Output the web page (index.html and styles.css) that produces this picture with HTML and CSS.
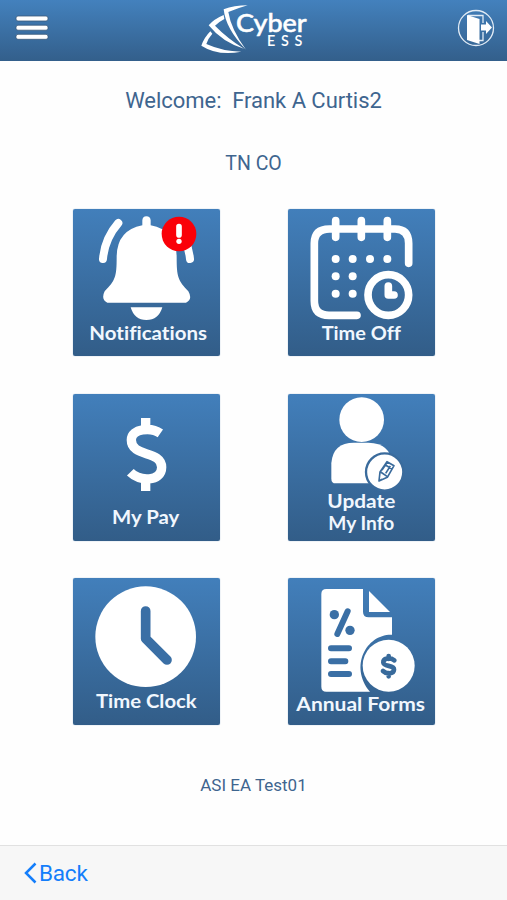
FILE: index.html
```html
<!DOCTYPE html>
<html lang="en">
<head>
<meta charset="utf-8">
<title>Cyber ESS</title>
<link rel="stylesheet" href="styles.css">
</head>
<body>
<header class="topbar">
  <svg class="menu" viewBox="0 0 36 30">
    <g class="bar"><rect x="2" y="3" width="32" height="5" rx="2"/><rect x="2" y="12.2" width="32" height="5" rx="2"/><rect x="2" y="21.3" width="32" height="5" rx="2"/></g>
  </svg>
  <svg class="logo" viewBox="0 0 390 183">
    <path d="M173 16Q132 16 101 28Q107 87 168 149Q123 88 115 36Q142 25 173 16Z"/>
    <path d="M101 45Q72 57 56 76Q98 128 162 146Q112 115 75 77Q86 66 103 57Z"/>
    <path d="M61 94Q43 112 34 137Q84 169 154 155Q98 154 49 132Q55 114 67 101Z"/>
    <text class="brand" x="138" y="96" textLength="212" lengthAdjust="spacingAndGlyphs">Cyber</text>
    <text class="brand-sub" x="231" y="138" textLength="106">ESS</text>
  </svg>
  <svg class="exit" viewBox="0 0 38 38">
    <circle class="thin" cx="19" cy="19" r="17.5"/>
    <path class="thin" d="M11 6.500H26V14M26 23V31.500H22"/>
    <path d="M10 6L22.500 10V35L10 31Z"/>
    <path d="M24 15.500H29V12L35 18.500L29 25V21.500H24Z"/>
  </svg>
</header>
<main class="content">
  <h1 class="welcome">Welcome:&nbsp; Frank A Curtis2</h1>
  <p class="company">TN CO</p>
  <nav class="tiles">
    <a class="tile"><svg viewBox="24 27 441 441">
      <path d="M232 76V61Q233 49 244 49Q256 49 257 61V76Q335 91 335 172C335 231 339 242 370 274Q384 298 363 308H127Q107 298 119 274C151 242 155 231 155 172Q155 91 232 76ZM197 322H292Q281 360 244 360Q208 360 197 322Z"/>
      <path class="line bell-wave" d="M160 69Q119 116 114 177M326 69Q369 116 375 177"/>
      <circle class="alert" cx="342" cy="102" r="52"/>
      <path class="line mark" d="M342 80V105"/><circle cx="342" cy="124" r="8"/>
      <text class="caption" x="73" y="419" textLength="353" lengthAdjust="spacingAndGlyphs">Notifications</text>
    </svg></a>
    <a class="tile"><svg viewBox="24 27 441 441">
      <path class="line calendar" d="M386 190V130Q386 87 345 87H148Q103 87 103 130V303Q103 346 147 346H231M167 62V112M244 62V112M322 62V112"/>
      <g><circle cx="167" cy="177" r="12"/><circle cx="218" cy="177" r="12"/><circle cx="270" cy="177" r="12"/><circle cx="322" cy="177" r="12"/><circle cx="167" cy="229" r="12"/><circle cx="218" cy="229" r="12"/><circle cx="167" cy="281" r="12"/><circle cx="218" cy="281" r="12"/></g>
      <circle class="line calendar" cx="325" cy="285" r="61"/>
      <path class="line calendar" d="M325 258V285H342"/>
      <text class="caption" x="125" y="419" textLength="238" lengthAdjust="spacingAndGlyphs">Time Off</text>
    </svg></a>
    <a class="tile"><svg viewBox="24 27 441 441">
      <path class="line dollar" d="M242 99V135M242 282V318M286 145C259 126 199 130 199 165C199 218 290 195 290 247C290 292 222 289 196 262"/>
      <text class="caption" x="141" y="417" textLength="202" lengthAdjust="spacingAndGlyphs">My Pay</text>
    </svg></a>
    <a class="tile"><svg viewBox="24 27 441 441">
      <circle cx="245" cy="104" r="67"/>
      <path d="M167 295Q154 295 154 281V234Q159 173 222 173H265Q333 175 337 237V295Z"/>
      <circle class="edit-ring" cx="314" cy="261" r="56"/>
      <path class="pencil" d="M297 288L300 261L321 230L342 242L322 277ZM315 239L336 252M302 261L321 274M317 265L331 243M306 255L322 232M297 288L306 283"/>
      <text class="caption" x="142" y="370" textLength="204" lengthAdjust="spacingAndGlyphs">Update</text>
      <text class="caption" x="145" y="435" textLength="198" lengthAdjust="spacingAndGlyphs">My Info</text>
    </svg></a>
    <a class="tile"><svg viewBox="24 27 441 441">
      <circle cx="242" cy="203" r="151"/>
      <path class="line hands" d="M242 126V209L306 273"/>
      <text class="caption" x="93" y="417" textLength="302" lengthAdjust="spacingAndGlyphs">Time Clock</text>
    </svg></a>
    <a class="tile"><svg viewBox="24 27 441 441">
      <path d="M139 60H249V128Q249 145 266 145H336V197C261 194 206 290 270 368H139Q124 368 124 353V75Q124 60 139 60ZM267 66L330 129H267Z"/>
      <g class="ink"><circle cx="163" cy="137" r="14"/><circle cx="210" cy="184" r="14"/></g>
      <path class="line form-line" d="M203 127L172 195M153 238H207M153 277H196M153 315H207"/>
      <circle cx="326" cy="290" r="78"/>
      <path class="line small-dollar" d="M326 261V270M326 312V322M343 274C329 264 309 268 310 281C311 295 343 286 342 302C341 316 319 316 309 306"/>
      <text class="caption" x="49" y="425" textLength="386" lengthAdjust="spacingAndGlyphs">Annual Forms</text>
    </svg></a>
  </nav>
  <p class="account">ASI EA Test01</p>
</main>
<footer class="bottombar">
  <a class="back"><svg class="chevron" viewBox="0 0 13 22"><path d="M11.500 1.500L2 11L11.500 20.500"/></svg><span>Back</span></a>
</footer>
</body>
</html>
```
FILE: styles.css
```css
* { box-sizing: border-box; }
body {
  margin: 0;
  height: 900px;
  display: flex;
  flex-direction: column;
  background: #fefefe;
  color: #3e658f;
  font-family: Roboto, sans-serif;
  overflow: hidden;
}
svg { display: block; fill: #fff; }
.topbar {
  height: 61px;
  flex: none;
  display: grid;
  grid-template-columns: 60px 1fr 60px;
  background: linear-gradient(#4381bd, #335f8b);
}
.menu { width: 36px; height: 30px; margin: 13px 0 0 14px; }
.bar { stroke: #3a5878; stroke-width: .8; }
.logo { width: 130px; height: 61px; justify-self: center; margin-left: 3px; }
.brand { font: 500 76px Lato, sans-serif; stroke: #fff; stroke-width: 1.5; }
.brand-sub { font: 600 43px Lato, sans-serif; }
.exit { width: 38px; height: 38px; margin: 9px 0 0 10px; }
.thin { fill: none; stroke: #e1ebf5; stroke-width: 1.3; }
.content { flex: 1; display: flex; flex-direction: column; align-items: center; }
.welcome, .company, .account { margin: 0; font-weight: 400; white-space: pre; }
.welcome { margin-top: 26px; font-size: 22px; line-height: 28px; letter-spacing: -.04px; }
.company { margin-top: 37px; font-size: 19.500px; line-height: 24px; }
.tiles {
  margin-top: 33px;
  display: grid;
  grid-template-columns: 147px 147px;
  gap: 37.500px 68px;
}
.tile {
  height: 147px;
  border-radius: 2px;
  background: linear-gradient(#427fbb, #325d88);
  box-shadow: 0 0 1px #6892b8;
}
.tile svg { width: 147px; height: 147px; }
.caption {
  font: 700 58px Lato, sans-serif;
  font-variant-ligatures: none;
  fill: #f1f7fe;
}
.line { fill: none; stroke: #fff; stroke-linecap: round; stroke-linejoin: round; }
.bell-wave { stroke-width: 24; }
.alert { fill: #fa0008; }
.mark { stroke-width: 17; }
.calendar { stroke-width: 23; }
.dollar { stroke-width: 28; stroke-linecap: butt; }
.edit-ring { stroke: #3a6b9c; stroke-width: 7; }
.pencil { fill: none; stroke: #3a6b9c; stroke-width: 5; stroke-linejoin: round; }
.hands { stroke: #3a6fa5; stroke-width: 29; }
.ink { fill: #3a6fa5; }
.form-line { stroke: #3a6fa5; stroke-width: 18; }
.small-dollar { stroke: #386a9b; stroke-width: 14; }
.account { margin-top: 49px; font-size: 17px; line-height: 22px; }
.bottombar {
  height: 55px;
  flex: none;
  border-top: 1px solid #e1e1e1;
  background: #f7f7f7;
}
.back {
  display: flex;
  align-items: center;
  height: 54px;
  padding-left: 24px;
  gap: 2px;
  color: #147efb;
  font-size: 22.500px;
  letter-spacing: -.2px;
}
.chevron { width: 13px; height: 22px; fill: none; stroke: #147efb; stroke-width: 2.500; }
```
